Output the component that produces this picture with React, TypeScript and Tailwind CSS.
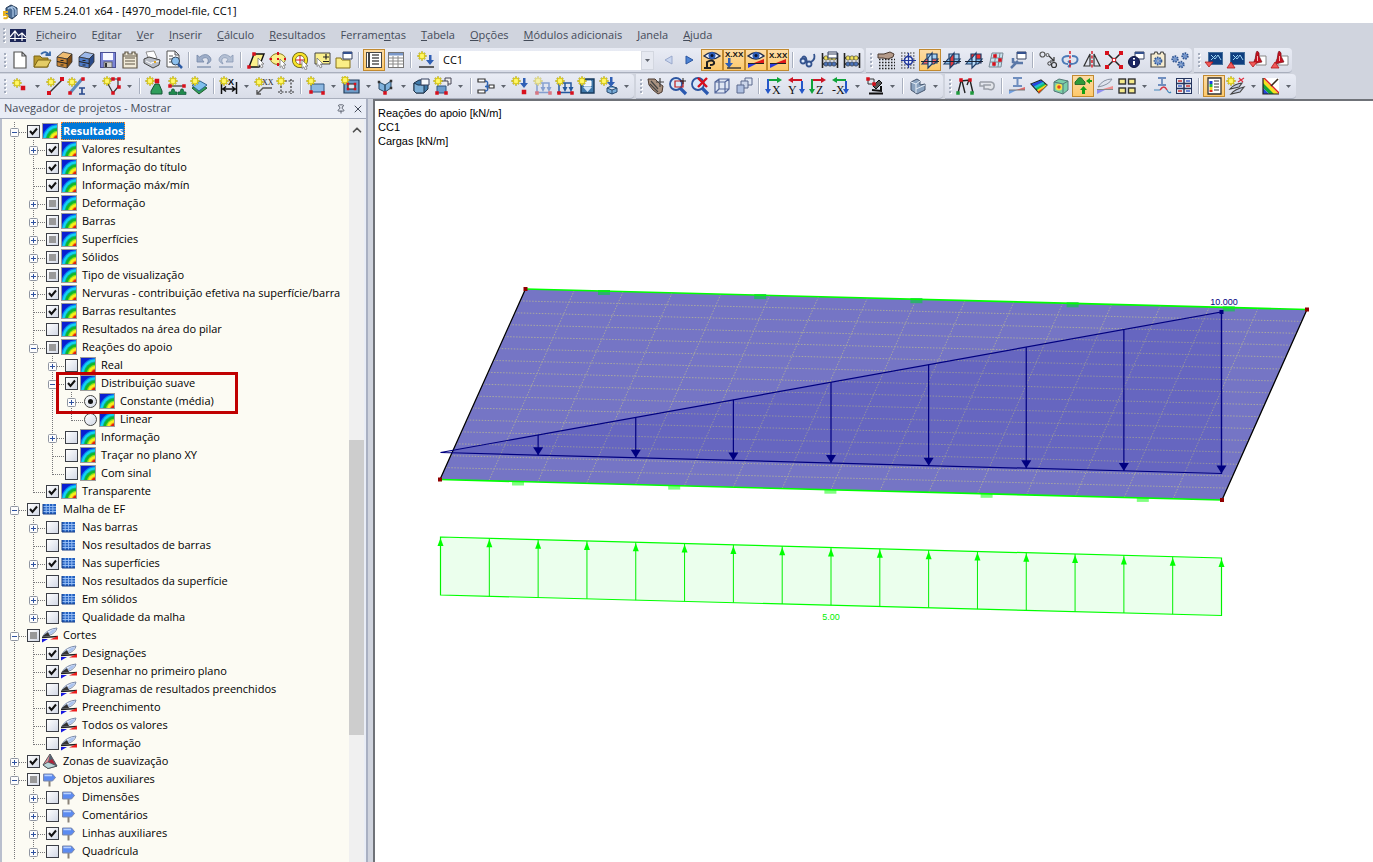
import { useState } from "react";
import type { ReactNode } from "react";
import { ChevronUp, Pin, X } from "lucide-react";

/* ---------- small drawing helpers ---------- */

const Star = ({ x = 5, y = 5 }: { x?: number; y?: number }) => (
  <g transform={`translate(${x} ${y})`}>
    <path d="M0-4.500V4.500M-4.500 0H4.500M-3-3L3 3M-3 3L3-3" stroke="#a89a10" strokeWidth="2" />
    <path d="M0-4V4M-4 0H4M-2.500-2.500L2.500 2.500M-2.500 2.500L2.500-2.500" stroke="#fff23a" strokeWidth="1.200" />
    <circle r="2" fill="#fff76b" />
  </g>
);

const Dot = ({ x, y, s = 3.5, c = "#d8101c" }: { x: number; y: number; s?: number; c?: string }) => (
  <rect x={x - s / 2} y={y - s / 2} width={s} height={s} fill={c} />
);

const P = ({ d, c = "#333", w = 1.2, f = "none" }: { d: string; c?: string; w?: number; f?: string }) => (
  <path d={d} stroke={c} strokeWidth={w} fill={f} />
);

const Arrow = ({ x, y, c = "#2f5fb5" }: { x: number; y: number; c?: string }) => (
  <path d={`M${x - 1} ${y - 9}h2.500v5h2.500l-4 5-4-5h3z`} fill={c} />
);

const Cursor = ({ x, y }: { x: number; y: number }) => (
  <path d={`M${x} ${y}l6 6h-2.500l1.500 3-1.800.8-1.400-3-1.800 1.700z`} fill="#fff" stroke="#777" strokeWidth=".8" />
);

const Support = ({ x, y, c = "#1f8a4c" }: { x: number; y: number; c?: string }) => (
  <path d={`M${x - 1} ${y}h2l1 3h2v2.500h-8v-2.500h2z`} fill={c} stroke="#11583a" strokeWidth=".7" />
);

const Cabinet = ({ top, front, side }: { top: string; front: string; side: string }) => (
  <>
    <P d="M3 7L9 2L18 4L13 9Z" c="#333" w={0.8} f={top} />
    <P d="M13 9L18 4V12L13 18Z" c="#333" w={0.8} f={side} />
    <P d="M3 7L13 9V18L3 16Z" c="#333" w={0.8} f={front} />
    <P d="M3 11.500L13 13.500M6.500 10.500h3M6.500 15h3" c="#222" w={1.2} />
  </>
);

const Eye = () => (
  <>
    <P d="M2 6Q10-1 18 6Q10 12 2 6Z" c="#23304f" w={1.4} f="#f4f7ff" />
    <circle cx="10" cy="5.500" r="3.500" fill="#2c5cb8" />
    <circle cx="10" cy="5.500" r="1.500" fill="#0b1430" />
  </>
);

const Slope = () => (
  <>
    <path d="M2 14L10 14L2 18Z" fill="#2d3bdc" />
    <path d="M18 9L18 13L8 13Z" fill="#e01b1b" />
    <P d="M2 13.500H18" c="#222" w={1} />
  </>
);

const GridDots = () => <P d="M3 3h15M3 6h15M3 9h15M3 12h15M3 15h15M3 18h15" c="#333" w={1.2} />;

const Planes = ({ red }: { red: "flat" | "left" | "front" }) => (
  <>
    <P d="M7 4H17V13H7Z" c="#1d3c66" w={1.2} f={red === "front" ? "#f23030" : "#a8d2f2"} />
    <P d="M2 14L6 9H18L14 14Z" c="#1d3c66" w={1.2} f={red === "flat" ? "#f26060" : "#8cc0ea"} />
    <P d="M8 8L12 3V14L8 18Z" c="#1d3c66" w={1.2} f={red === "left" ? "#e23c3c" : "#b8dcf8"} />
    <P d="M1 11.500H19" c="#1a2436" w={1} />
  </>
);

const Boxed = () => (
  <>
    <P d="M3 7L8 4H17V13L13 17H5L3 15Z" c="#1f3348" w={1} f="#3f78a8" />
    <P d="M3 7L7 9H13V17H5L3 15Z" c="#1f3348" w={1} f="#7db0d8" />
  </>
);

const Axis = ({ t, a, b, flip = false }: { t: string; a: string; b: string; flip?: boolean }) => (
  <>
    {flip ? <P d="M16 4H6" c={a} w={2} /> : <P d="M4 4H14" c={a} w={2} />}
    {flip ? <path d="M7 1V7L2 4Z" fill={a} /> : <path d="M13 1V7L18 4Z" fill={a} />}
    {flip ? <path d="M15 5h2v8h2l-3 5l-3-5h2z" fill={b} /> : <path d="M3 3h2v10h2l-3 5l-3-5h2z" fill={b} />}
    <text x={flip ? 2 : 8} y="18" fontSize="12" fontFamily="Liberation Serif" fill="#111">
      {t}
    </text>
  </>
);

const Frames = ({ c }: { c: string }) => (
  <>
    <P d="M4 16V7H10V13M10 7H16V13M2 16.500H17" c={c} w={1.5} />
    <path d="M7.500 11h5l-2.500 5zM13.500 11h5l-2.500 5z" fill={c} />
    <Dot x={4} y={17} />
    <Dot x={17} y={17} />
    <Star x={5} y={5} />
  </>
);

const Glass = () => (
  <>
    <P d="M12 12L18 18" c="#2b59b0" w={3.2} />
    <circle cx="8" cy="8" r="6" fill="#d7e8fa" stroke="#2d55a0" strokeWidth="1.800" />
  </>
);

const Abacus = () => (
  <>
    <P d="M2.500 3V18M17.500 3V18M3 8H17M3 14H17" c="#222" w={1.6} />
    <g stroke="#333" strokeWidth=".6">
      {[6, 10, 14].map((x) => (
        <circle key={x} cx={x} cy="8" r="2.200" fill="#f1e15a" />
      ))}
      {[6, 10, 14].map((x) => (
        <circle key={x} cx={x} cy="14" r="2.200" fill="#4a72b8" />
      ))}
    </g>
  </>
);

const Panel = () => (
  <>
    <P d="M9 2H18V9H9Z" c="#34415e" w={1} f="#fff" />
    <P d="M9 3H18" c="#34518e" w={2} />
  </>
);

const Gear = ({ x, y, r = 3.5 }: { x: number; y: number; r?: number }) => (
  <g transform={`translate(${x} ${y})`}>
    <circle r={r} fill="#7fa3dd" stroke="#31558f" strokeWidth="1.800" strokeDasharray="1.500 1" />
    <circle r={r / 3} fill="#f4f7fb" stroke="#31558f" strokeWidth=".6" />
  </g>
);

const Monitor = () => (
  <>
    <rect x="4.500" y="2.500" width="14" height="12" fill="#0f3f80" stroke="#46709c" />
    <P d="M7 5L11 9L14 5L17 10M7 10L12 5" c="#9cd4f4" w={1} />
  </>
);

const Pdf = () => (
  <>
    <P d="M8 6H18V15H8Z" c="#888" w={1} f="#fff" />
    <path d="M9 1Q12 2 11 6L14 12L5 14Q8 8 8 3Z" fill="#c41220" stroke="#6d0d14" strokeWidth=".6" />
    <P d="M9.500 6V11" c="#f7b5b5" w={1} />
  </>
);

const DownMark = () => <path d="M1 12H9L5 17Z" fill="#f25a5a" stroke="#b01818" strokeWidth=".8" />;
const UpMark = () => <path d="M1 18H9L5 12Z" fill="#f25a5a" stroke="#b01818" strokeWidth=".8" />;

/* ---------- toolbar icons, drawn on a 20x20 grid ---------- */

const icons: Record<string, ReactNode> = {
  new: <P d="M4 2H12L16 6V18H4ZM12 2V6H16" c="#555" w={1.2} f="#fff" />,
  open: (
    <>
      <P d="M2 6H8L10 8H16V17H2Z" c="#7c6414" w={1} f="#b99a2d" />
      <P d="M2 17L6 10H19L15 17Z" c="#7c6414" w={1} f="#e4cc66" />
      <P d="M9 4Q14 0 17 5M13.500 5H18V1.500" c="#3767a8" w={1.800} />
    </>
  ),
  cabBrown: <Cabinet top="#f0bd72" front="#c98635" side="#7b4a14" />,
  cabBlue: <Cabinet top="#9db9ea" front="#4f7cc8" side="#28498a" />,
  save: (
    <>
      <rect x="2.500" y="2.500" width="15" height="15" fill="#7b85d6" stroke="#4a4f94" />
      <rect x="5" y="3" width="10" height="7" fill="#f7f7ff" />
      <rect x="6" y="12" width="8" height="5.500" fill="#ccc" stroke="#555" strokeWidth=".8" />
      <rect x="7" y="13" width="2" height="4" fill="#333" />
    </>
  ),
  report: <P d="M3 4H5V2H8V4H12V2H15V4H17V18H3ZM5 8H15M5 11H15M5 14H15M3 6H17" c="#5e5444" w={1.2} f="#f1ead8" />,
  print: (
    <>
      <P d="M4 2L12 1L15 8L7 10Z" c="#777" w={0.8} f="#fff" />
      <P d="M2 9L7 7L18 10L17 15L11 18L2 13Z" c="#444" w={1} f="#b9bdc6" />
      <P d="M9 13L17 11M4 11L10 14" c="#fff" w={1} />
      <Dot x={13} y={12} s={2} c="#e2a71c" />
    </>
  ),
  preview: (
    <>
      <P d="M3 1H11L15 5V17H3ZM11 1V5H15M5 6H9M5 9H9M5 12H9" c="#555" w={1} f="#fff" />
      <circle cx="11.500" cy="11" r="4" fill="#8cc0ee" stroke="#345" />
      <P d="M14 14L18 18" c="#2b5aa5" w={2.5} />
    </>
  ),
  undo: (
    <>
      <path d="M3 5V12H10L8 9.500Q11 6 14 9Q15 11 13 14Q19 11 16 7Q12 2 5.500 7Z" fill="#9dadc8" stroke="#7486a6" strokeWidth=".8" />
      <P d="M3 17H17" c="#8f9eb8" w={1.6} />
    </>
  ),
  redo: (
    <>
      <path d="M17 5V12H10L12 9.500Q9 6 6 9Q5 11 7 14Q1 11 4 7Q8 2 14.500 7Z" fill="#b4c0d4" stroke="#8898b4" strokeWidth=".8" />
      <P d="M3 17H17" c="#9dabc2" w={1.6} />
    </>
  ),
  plate: (
    <>
      <P d="M3 17L8 4H18L13 17Z" c="#111" w={1.4} f="#fbf08c" />
      <Dot x={3} y={17} />
      <Dot x={8} y={4} />
      <Cursor x={12} y={8} />
    </>
  ),
  ellipse: (
    <>
      <ellipse cx="10" cy="9" rx="7.500" ry="5.500" fill="#fbf08c" stroke="#8c7b22" />
      <P d="M10 2V5M10 13V16M1.500 9H4M16 9H18M9 9H11" c="#d8101c" w={2} />
      <Cursor x={12} y={9} />
    </>
  ),
  ring: (
    <>
      <circle cx="10" cy="10" r="6" fill="#fff" stroke="#5c5208" strokeWidth="4" />
      <circle cx="10" cy="10" r="6" fill="none" stroke="#f7e32a" strokeWidth="2.500" />
      <P d="M10 6V14M6 10H14" c="#d8101c" w={1} />
      <Cursor x={12} y={10} />
    </>
  ),
  selPm: (
    <>
      <P d="M3 3H18V14H3Z" c="#444" w={1} f="#fbf08c" />
      <P d="M11 7H17M14 4V9.500M11 11.500H17" c="#222" w={1.2} />
      <Cursor x={5} y={8} />
    </>
  ),
  folders: (
    <>
      <P d="M2 8H7L8 10H16V18H2Z" c="#857019" w={1} f="#fbee86" />
      <Panel />
    </>
  ),
  listOn: (
    <>
      <rect x="2.500" y="2.500" width="15" height="15" fill="#fff" stroke="#444" />
      <P d="M5 3V17" c="#444" w={2} />
      <P d="M8 5H15M8 8H15M8 11H15M8 14H15" c="#555" w={1.5} />
    </>
  ),
  table: (
    <>
      <rect x="2.500" y="2.500" width="15" height="15" fill="#fff" stroke="#777" />
      <rect x="3" y="3" width="14" height="2.500" fill="#7a98c9" />
      <P d="M3 8H17M3 11H17M3 14H17M7 6V17M12 6V17" c="#888" w={1} />
    </>
  ),
  loadCase: (
    <>
      <Star x={6} y={6} />
      <Arrow x={14} y={14} />
      <P d="M3 17H18" c="#333" w={1.5} />
    </>
  ),
  prev: <path d="M14 6V14L7 10Z" fill="#c9d6ef" stroke="#9aa9cc" />,
  next: <path d="M6 6V14L13 10Z" fill="#4c83d4" stroke="#2c56a0" />,
  eyeSupport: (
    <>
      <P d="M5 17V12Q10 9 12 12Q13 15 8 15M2 18H9" c="#222" w={2} />
      <Eye />
    </>
  ),
  valDown: (
    <>
      <text x="1" y="7" fontSize="8" fontWeight="bold" fontFamily="Liberation Sans" fill="#111">
        X.XX
      </text>
      <Arrow x={5} y={17} />
      <P d="M3 18H17" c="#333" w={1.4} />
    </>
  ),
  eyeSlope: (
    <>
      <Slope />
      <Eye />
    </>
  ),
  valSlope: (
    <>
      <Slope />
      <text x="1" y="8" fontSize="8" fontWeight="bold" fontFamily="Liberation Sans" fill="#111">
        X.XX
      </text>
    </>
  ),
  glasses: (
    <g fill="#dbe8fa" stroke="#34538e" strokeWidth="1.800">
      <circle cx="5" cy="11" r="2.500" />
      <circle cx="11" cy="14" r="2.500" />
      <path d="M4 8Q6 5 8 8L9 12M13 12Q18 9 16 4" fill="none" />
    </g>
  ),
  abacusPanel: (
    <>
      <Abacus />
      <P d="M8 2H17V8H8ZM8 4H17" c="#34415e" w={1} f="#fff" />
    </>
  ),
  abacus: <Abacus />,
  hand: (
    <>
      <g strokeDasharray="1.500 1.500">
        <P d="M3 9.500h16M3 12.500h16M3 15.500h16M3 18.500h16" c="#222" w={1.4} />
      </g>
      <P d="M2 4H8L14 2L18 4L17 7L12 9L7 8H2Z" c="#4b3a30" w={1} f="#b59b8a" />
    </>
  ),
  snap: (
    <>
      <g strokeDasharray="1.500 1.500">
        <GridDots />
      </g>
      <circle cx="10.500" cy="10.500" r="4" fill="#e8eefb" stroke="#22389c" strokeWidth="1.600" />
      <P d="M10.500 3V18M3 10.500H18" c="#22389c" w={1.2} />
    </>
  ),
  planeA: <Planes red="flat" />,
  planeB: <Planes red="left" />,
  planeC: <Planes red="front" />,
  meshPts: (
    <>
      <P d="M6 3H17L15 17H3ZM10 3L8 17M14 3L12 17M5 8H17M4 12H16" c="#7b8a96" w={1} f="#c6e2ee" />
      <Dot x={9} y={6} />
      <Dot x={14} y={10} />
      <Dot x={8} y={14} />
    </>
  ),
  wrench: (
    <>
      <P d="M3 18L10 11M5 8V12L8 13H15" c="#5a78a8" w={2.5} />
      <Panel />
    </>
  ),
  copyMove: (
    <>
      <circle cx="4.500" cy="4.500" r="2.500" fill="none" stroke="#555" strokeWidth="1.200" />
      <circle cx="9.500" cy="5" r="1.500" fill="none" stroke="#555" />
      <circle cx="16" cy="15" r="2.500" fill="none" stroke="#333" strokeWidth="1.200" />
      <circle cx="11.500" cy="13.500" r="1.700" fill="none" stroke="#333" />
      <P d="M11 6L16 11M16 7V11H12" c="#333" />
    </>
  ),
  rotate: (
    <>
      <P d="M9 6Q2 6 2.500 10Q3 14 8 14M12 6Q18 6 17.500 10Q17 14 11 14M8 11L11 14L8 17" c="#4c7bb8" w={2} />
      <g strokeDasharray="3 1.500">
        <P d="M10 1V19" c="#d8101c" w={1.4} />
      </g>
    </>
  ),
  mirror: (
    <>
      <P d="M8 4V16H2ZM12 4V16H18Z" c="#333" w={1.2} />
      <g strokeDasharray="3 1.500">
        <P d="M10 1V19" c="#d8101c" w={1.4} />
      </g>
    </>
  ),
  crossNodes: (
    <>
      <P d="M3 3L17 17M17 3L3 17" c="#222" w={1.5} />
      <Dot x={3} y={3} s={4} />
      <Dot x={17} y={3} s={4} />
      <Dot x={3} y={17} s={4} />
      <Dot x={17} y={17} s={4} />
      <circle cx="10" cy="10" r="1.800" fill="#fff" stroke="#d8101c" />
    </>
  ),
  info: (
    <>
      <Panel />
      <circle cx="8" cy="12" r="5.500" fill="#1c2763" stroke="#0d1440" />
      <P d="M8 11V15M8 8V9.500" c="#fff" w={2} />
    </>
  ),
  gearBox: (
    <>
      <P d="M3 4H6L7 2H9L10 4H12L13 2H15L16 4H17V17H3Z" c="#444" w={1.2} f="#f6ecd0" />
      <Gear x={10} y={11} r={3.5} />
    </>
  ),
  gears: (
    <>
      <Gear x={5} y={9} r={2.8} />
      <Gear x={15} y={6} r={2.8} />
      <Gear x={11} y={14.5} r={2.8} />
    </>
  ),
  monDown: (
    <>
      <Monitor />
      <DownMark />
    </>
  ),
  monUp: (
    <>
      <Monitor />
      <UpMark />
    </>
  ),
  pdfDown: (
    <>
      <Pdf />
      <DownMark />
    </>
  ),
  pdfUp: (
    <>
      <Pdf />
      <UpMark />
    </>
  ),
  node: (
    <>
      <Star x={7} y={7} />
      <Dot x={13} y={12} s={4.5} />
    </>
  ),
  line: (
    <>
      <P d="M4 17L17 4" c="#333" w={1.4} />
      <Star x={6} y={6} />
      <Dot x={4} y={17} s={4} />
      <Dot x={17} y={3} s={4} />
    </>
  ),
  member: (
    <>
      <P d="M3 17L15 3" c="#5d8bbd" w={3} />
      <P d="M12 12H18M12 18H18M15 12V18" c="#27488c" w={1.6} />
      <Star x={5} y={6} />
      <Dot x={3} y={17} />
      <Dot x={16} y={3} />
    </>
  ),
  polyline: (
    <>
      <P d="M6 8L11 17L16 11V3H8" c="#333" w={1.2} />
      <Star x={5} y={5} />
      <Dot x={11} y={3} />
      <Dot x={17} y={3} />
      <Dot x={17} y={11} />
      <Dot x={11} y={17} />
    </>
  ),
  nodeSupport: (
    <>
      <P d="M10 8H14L17 15V18H6V15Z" c="#155434" w={1} f="#2f9e5b" />
      <Star x={5} y={5} />
      <Dot x={12} y={5} s={4.5} />
    </>
  ),
  lineSupport: (
    <>
      <P d="M3 10H17" c="#333" w={1.2} />
      <Support x={6} y={13} />
      <Support x={15} y={13} />
      <Star x={6} y={5} />
      <Dot x={3} y={10} />
      <Dot x={17} y={10} />
    </>
  ),
  surfSupport: (
    <>
      <P d="M3 12L11 8L18 12L10 18Z" c="#1d5c2c" w={1} f="#2f9e5b" />
      <P d="M3 9.500L11 5L18 9L10 15Z" c="#2f6390" w={1} f="#7fc0ee" />
      <Star x={6} y={5} />
    </>
  ),
  dimension: (
    <>
      <P d="M2.500 6V18M17.500 6V18M3 13H17M7 10.500L4 13L7 15.500M13 10.500L16 13L13 15.500" c="#111" w={1.5} />
      <text x="9" y="9" fontSize="9" fontWeight="bold" fontFamily="Liberation Sans" fill="#111">
        X
      </text>
      <Star x={5} y={5} />
    </>
  ),
  comment: (
    <>
      <P d="M3 18L9 12H18M3 14V18H7" c="#555" w={1.4} />
      <text x="8" y="9" fontSize="8" fontFamily="Liberation Serif" fill="#222">
        XX
      </text>
      <Star x={5} y={6} />
    </>
  ),
  guides: (
    <>
      <g strokeDasharray="2 1.500">
        <P d="M5 3V18M15 3V18M2 5H18M2 16H18" c="#333" w={1.2} />
      </g>
      <Star x={5} y={5} />
    </>
  ),
  surface: (
    <>
      <P d="M5 8H18V16H5Z" c="#2f5580" w={1} f="#8db8e2" />
      <Star x={5} y={5} />
      <Dot x={5} y={16} />
      <Dot x={17} y={17} />
    </>
  ),
  opening: (
    <>
      <P d="M3 4H18V17H3Z" c="#243f5e" w={1.2} f="#6e9cc8" />
      <P d="M7 8H14V13H7Z" c="#222" w={1.2} f="#dfe7f2" />
      <Star x={4} y={4} />
      <Dot x={7} y={8} s={2.5} />
      <Dot x={14} y={8} s={2.5} />
      <Dot x={7} y={13} s={2.5} />
      <Dot x={14} y={13} s={2.5} />
    </>
  ),
  shell: (
    <>
      <P d="M3 6L9 9V16L3 13ZM9 9L15 5V12L9 16Z" c="#2a4a66" w={1} f="#7fb1dc" />
      <Dot x={3} y={6} c="#333" s={2.5} />
      <Dot x={15} y={12} c="#333" s={2.5} />
      <Dot x={15} y={5} c="#333" s={2.5} />
      <Dot x={9} y={17} />
    </>
  ),
  solid: (
    <>
      <Boxed />
      <P d="M10 3H18V9H10Z" c="#34415e" w={1} f="#f6f8fc" />
    </>
  ),
  copyObj: (
    <>
      <P d="M4 10H13V17H4Z" c="#2f5580" w={1} f="#6c9ccc" />
      <P d="M9 5H15V10M12 2H18V8H15M12 2V5" c="#445" w={1} f="#eee" />
      <Star x={5} y={5} />
      <Dot x={4} y={17} />
      <Dot x={13} y={17} />
    </>
  ),
  loadTree: (
    <>
      <P d="M2 3H9V6H2ZM2 14H9V17H2ZM13 9H18V12H13Z" c="#333" w={1.2} f="#fff" />
      <P d="M9 5Q13 5 11 10M9 15Q13 15 11 11M9 10.500H13" c="#2e63b0" w={1.5} />
    </>
  ),
  nodeLoad: (
    <>
      <Star x={5} y={5} />
      <Arrow x={13} y={11} />
      <Dot x={13} y={16} s={4.5} />
    </>
  ),
  lineLoadOff: (
    <g opacity=".5">
      <Frames c="#2f5fb5" />
    </g>
  ),
  lineLoad: <Frames c="#24589e" />,
  surfLoad: (
    <>
      <P d="M4 3H17V17H4Z" c="#173a5e" w={1.4} f="#3f78aa" />
      <P d="M7 5H14V10H7Z" c="#fff" w={1} f="#e9f1fa" />
      <path d="M6 11h9l-4.500 5z" fill="#cfe4f8" />
      <Star x={5} y={5} />
    </>
  ),
  solidLoad: (
    <>
      <P d="M8 12L12 10L18 12V16L13 18L8 16ZM8 12L13 14L18 12M13 14V18" c="#284c72" w={1} f="#78abd6" />
      <Star x={5} y={5} />
      <Arrow x={12} y={10} />
    </>
  ),
  pan: (
    <>
      <P d="M2 3H9L14 8L17 10L16 16L12 18L7 14L3 9Z" c="#4b3a30" w={1} f="#a8917f" />
      <P d="M14 2V11M10 6H18M5 5L12 13M4 8L12 16" c="#444" w={1.2} />
    </>
  ),
  zoomWin: (
    <>
      <Glass />
      <P d="M7 5H15V11H7Z" c="#c21a1a" w={1.2} />
      <P d="M15 2V8M12 5H18" c="#222" w={1} />
    </>
  ),
  zoomAll: (
    <>
      <Glass />
      <P d="M8 2L17 11M17 2L8 11" c="#d8101c" w={2.4} />
    </>
  ),
  wireBox: <P d="M3 6L7 3H17V13L13 17H3ZM3 6H13V17M13 6L17 3M7 3V13H17M7 13L3 17" c="#56699c" w={1.2} f="#dfe6f3" />,
  stack: (
    <>
      <P d="M11 2H18V9H11Z" c="#5b688c" w={1} f="#dfe6f3" />
      <P d="M7 5H14V12H7Z" c="#5b688c" w={1} f="#ccd6ea" />
      <P d="M3 9H10V17H3Z" c="#5b688c" w={1} f="#aebfe0" />
    </>
  ),
  axX: <Axis t="X" a="#10a33a" b="#2457c9" />,
  axY: <Axis t="Y" a="#cc1626" b="#2457c9" flip />,
  axZ: <Axis t="Z" a="#cc1626" b="#10a33a" />,
  axNX: <Axis t="-X" a="#10a33a" b="#2457c9" flip />,
  microscope: (
    <>
      <P d="M8 10L14 4L17 7L11 13Z" c="#111" w={1} f="#555" />
      <P d="M4 17.500H18M7 14L16 15V10" c="#111" w={2} />
      <P d="M3 3H9V8H3Z" c="#333" w={1} />
      <Dot x={3} y={3} />
      <Dot x={9} y={8} />
    </>
  ),
  iso: (
    <>
      <P d="M3 6L9 3L12 5V9L17 8V14L9 18L3 14Z" c="#46566e" w={1} f="#8ba3bf" />
      <P d="M3 6L8 8V17M8 8L12 5M8 13L17 9" c="#e6eef7" w={1} />
    </>
  ),
  portal: (
    <>
      <P d="M3 17L6 5L15 4L18 17M7 5L10 17M14 4L12 9" c="#222" w={1.4} />
      <Dot x={6} y={4} />
      <Dot x={15} y={4} />
      <Dot x={3} y={17} c="#1f9a3c" />
      <Dot x={17} y={17} c="#1f9a3c" />
    </>
  ),
  clip: <P d="M3 6H14Q18 7 17 11Q16 15 11 13H7V9H14M3 6V10H7" c="#9a9fa8" w={1.5} f="#e3e5ea" />,
  section: (
    <>
      <P d="M6 2H15M6 10H15M10.500 2V10" c="#6f8ebf" w={2} />
      <path d="M2 14H10L2 18Z" fill="#6f9fe0" />
      <path d="M18 11V14H9Z" fill="#e06a6a" />
      <P d="M2 14H18" c="#777" w={1} />
    </>
  ),
  isoSurf: (
    <>
      <P d="M2 8L12 4L18 9L10 17Z" c="#222" w={1.2} f="#18c05a" />
      <path d="M2.500 8L12 4.500L14 6L5 10.500Z" fill="#2746e0" />
      <path d="M5 10.500L14 6L15.500 7.200L6.500 12.500Z" fill="#20b8d8" />
      <path d="M8 14L17 8.500L18 9L10 17Z" fill="#f5d522" />
      <path d="M9 15.500L14.500 12L10 17Z" fill="#e8341c" />
    </>
  ),
  isoCube: (
    <>
      <P d="M3 6L8 3L17 5V14L12 18L3 15Z" c="#577" w={1} f="#79cfa8" />
      <circle cx="8" cy="11" r="3.500" fill="#f4e34a" />
      <circle cx="8" cy="11" r="1.800" fill="#e6461e" />
      <P d="M12 8V18M3 6L12 8L17 5" c="#577" w={1} />
    </>
  ),
  supportReac: (
    <>
      <P d="M4 4Q5 1.500 7 1.500Q9 1.500 10 4L12 6V8.500H2V6Z" c="#1b5c22" w={0.8} f="#2f9a3a" />
      <path d="M9 18V14H7L10.500 10L14 14H12V18Z" fill="#14a014" />
      <path d="M19 4V6H17V8L13 5L17 2V4Z" fill="#14a014" />
    </>
  ),
  cut: (
    <>
      <P d="M3 11Q8 3 17 3Q14 9 3 11Z" c="#8a93a3" w={1} f="#dfe4ee" />
      <path d="M2 14H10L2 18Z" fill="#8f8ff0" />
      <path d="M18 10V13H8Z" fill="#f09090" />
      <P d="M2 13.500H18" c="#888" w={1} />
    </>
  ),
  windows: (
    <g fill="#f4e88a" stroke="#333" strokeWidth="1.400">
      <rect x="2" y="3" width="6.500" height="5" />
      <rect x="11.500" y="3" width="6.500" height="5" />
      <rect x="2" y="12" width="6.500" height="5" />
      <rect x="11.500" y="12" width="6.500" height="5" />
    </g>
  ),
  curve: (
    <>
      <P d="M6 2H14M6 9H14M10 2V9" c="#6f8ebf" w={1.8} />
      <P d="M8 14Q12 8 15 14" c="#d43a4a" w={1.4} />
      <P d="M2 14H8M15 14Q17 18 19 16" c="#48b" w={1.2} />
    </>
  ),
  resTable: (
    <>
      <rect x="2.500" y="2.500" width="15" height="15" fill="#e8ecf5" stroke="#24345e" />
      <P d="M3 7.500H17M3 12.500H17M10 3V17" c="#24345e" w={1.5} />
      <P d="M4 5H8M12 10H16M4 15H8" c="#c33" w={1.5} />
      <P d="M12 5H16M4 10H8M12 15H16" c="#46c" w={1.5} />
    </>
  ),
  panelOn: (
    <>
      <P d="M4 2H17V18H4Z" c="#333" w={1.3} f="#fff" />
      <P d="M7 5V8" c="#1a3fe0" w={3} />
      <P d="M7 8V11" c="#1fba3f" w={3} />
      <P d="M7 11V14" c="#f2d41f" w={3} />
      <P d="M7 14V16" c="#df2a1a" w={3} />
      <P d="M10 5H15M10 8H15M10 11H15M10 14H15" c="#333" w={1.2} />
    </>
  ),
  newCut: (
    <>
      <P d="M4 13Q8 8 16 7L13 11ZM5 18Q9 13 18 11L14 16Z" c="#444" w={1.2} f="#c5cde0" />
      <P d="M12 6L18 2M13 2L17 6" c="#e03040" w={1.2} />
      <Star x={5} y={5} />
    </>
  ),
  colors: (
    <>
      <rect x="2" y="2" width="16" height="16" fill="#fff" />
      <path d="M2 2L18 18H12L2 8Z" fill="#f5df1f" />
      <path d="M2 2L4 2L18 16V18Z" fill="#e02222" />
      <path d="M2 7L13 18H8L2 12Z" fill="#12a53a" />
      <path d="M2 12L8 18H2Z" fill="#2347dd" />
      <P d="M10 10L17 3" c="#3a2a1a" w={1.6} />
      <P d="M2 2V18H18" c="#222" w={1.2} />
    </>
  ),
};

/* ---------- toolbars ---------- */

// "|" is a separator, a trailing ">" adds a drop-down arrow, a leading "*" is pressed
const fileBar = "new open cabBrown cabBlue save report print preview | undo redo | plate ellipse ring selPm folders | *listOn table | loadCase".split(" ");
const caseBar = "prev next *eyeSupport *valDown *eyeSlope *valSlope | glasses abacusPanel abacus".split(" ");
const gridBar = "hand snap *planeA planeB planeC meshPts wrench | copyMove rotate mirror crossNodes info gearBox gears".split(" ");
const exportBar = "monDown monUp pdfDown pdfUp".split(" ");
const insertBar = "node> line member> polyline> | nodeSupport lineSupport surfSupport | dimension> comment guides | surface> opening> shell> solid copyObj> | loadTree> nodeLoad lineLoadOff lineLoad surfLoad solidLoad>".split(" ");
const viewBar = "pan zoomWin zoomAll wireBox stack | axX axY axZ axNX> microscope> | iso>".split(" ");
const resultBar = "portal clip | section isoSurf isoCube *supportReac cut windows> curve resTable | *panelOn newCut> colors>".split(" ");

function ToolItem({ item }: { item: string }) {
  if (item === "|") return <span className="mx-[3px] h-4 w-0.5 shrink-0 border-l border-[#a9b0bf] bg-white" />;
  const pressed = item.startsWith("*");
  const hasMenu = item.endsWith(">");
  const name = item.replace(/[*>]/g, "");
  return (
    <>
      <button
        type="button"
        aria-label={name}
        aria-pressed={pressed}
        className={
          pressed
            ? "flex h-[22px] w-[22px] shrink-0 items-center justify-center border border-[#c28a30] bg-linear-to-b from-[#fddca4] to-[#fdc96a]"
            : "flex h-[22px] w-[22px] shrink-0 items-center justify-center hover:bg-[#fde3b0]"
        }
      >
        <svg viewBox="0 0 20 20" className="h-5 w-5 shrink-0">
          {icons[name]}
        </svg>
      </button>
      {hasMenu && (
        <button type="button" aria-label={`${name} menu`} className="flex h-[22px] w-[13px] shrink-0 items-center justify-center">
          <Caret />
        </button>
      )}
    </>
  );
}

const Caret = () => (
  <svg viewBox="0 0 5 3" className="h-[3px] w-[5px]">
    <path d="M0 0H5L2.500 3Z" fill="#5f646e" />
  </svg>
);

const Grip = () => (
  <svg viewBox="0 0 8 16" className="h-4 w-2 shrink-0">
    {[1, 5, 9, 13].map((y) => (
      <g key={y}>
        <rect x="4" y={y + 1} width="2" height="2" fill="#fff" />
        <rect x="3" y={y} width="2" height="2" fill="#a5adbd" />
      </g>
    ))}
  </svg>
);

function Bar({ items, children }: { items: string[]; children?: ReactNode }) {
  return (
    <div className="flex h-[25px] shrink-0 items-center rounded-r-sm border-b border-[#a9afbd] bg-linear-to-b from-[#e9ecf5] to-[#d9dde8] pr-px pl-px">
      <Grip />
      {items.map((item, i) => (
        <ToolItem key={i} item={item} />
      ))}
      {children}
    </div>
  );
}

const menus: [string, string, string][] = [
  ["", "F", "icheiro"],
  ["E", "d", "itar"],
  ["", "V", "er"],
  ["", "I", "nserir"],
  ["", "C", "álculo"],
  ["", "R", "esultados"],
  ["Ferrame", "n", "tas"],
  ["", "T", "abela"],
  ["", "O", "pções"],
  ["", "M", "ódulos adicionais"],
  ["", "J", "anela"],
  ["", "A", "juda"],
];

/* ---------- project navigator ---------- */

type Check = "on" | "off" | "mixed" | "radioOn" | "radioOff";
type Glyph = "result" | "mesh" | "cut" | "zone" | "sign";
type TreeNode = { label: string; icon: Glyph; check: Check; closed?: boolean; more?: boolean; selected?: boolean; children?: TreeNode[] };

const n = (label: string, icon: Glyph, check: Check, extra: Partial<TreeNode> = {}): TreeNode => ({ label, icon, check, ...extra });
const closed = { closed: true };

const tree: TreeNode[] = [
  n("Resultados", "result", "on", {
    selected: true,
    children: [
      n("Valores resultantes", "result", "on", closed),
      n("Informação do título", "result", "on"),
      n("Informação máx/mín", "result", "on"),
      n("Deformação", "result", "mixed", closed),
      n("Barras", "result", "mixed", closed),
      n("Superfícies", "result", "mixed", closed),
      n("Sólidos", "result", "mixed", closed),
      n("Tipo de visualização", "result", "mixed", closed),
      n("Nervuras - contribuição efetiva na superfície/barra", "result", "on", closed),
      n("Barras resultantes", "result", "on"),
      n("Resultados na área do pilar", "result", "off"),
      n("Reações do apoio", "result", "mixed", {
        children: [
          n("Real", "result", "off", closed),
          n("Distribuição suave", "result", "on", {
            children: [n("Constante (média)", "result", "radioOn", closed), n("Linear", "result", "radioOff")],
          }),
          n("Informação", "result", "off", closed),
          n("Traçar no plano XY", "result", "off"),
          n("Com sinal", "result", "off"),
        ],
      }),
      n("Transparente", "result", "on"),
    ],
  }),
  n("Malha de EF", "mesh", "on", {
    children: [
      n("Nas barras", "mesh", "off", closed),
      n("Nos resultados de barras", "mesh", "off"),
      n("Nas superfícies", "mesh", "on", closed),
      n("Nos resultados da superfície", "mesh", "off"),
      n("Em sólidos", "mesh", "off", closed),
      n("Qualidade da malha", "mesh", "off", closed),
    ],
  }),
  n("Cortes", "cut", "mixed", {
    children: [
      n("Designações", "cut", "on"),
      n("Desenhar no primeiro plano", "cut", "on"),
      n("Diagramas de resultados preenchidos", "cut", "off"),
      n("Preenchimento", "cut", "on"),
      n("Todos os valores", "cut", "off"),
      n("Informação", "cut", "off"),
    ],
  }),
  n("Zonas de suavização", "zone", "on", closed),
  n("Objetos auxiliares", "sign", "mixed", {
    more: true,
    children: [
      n("Dimensões", "sign", "off", closed),
      n("Comentários", "sign", "off", closed),
      n("Linhas auxiliares", "sign", "on", closed),
      n("Quadrícula", "sign", "off", { closed: true, more: true }),
    ],
  }),
];

const glyphs: Record<Glyph, ReactNode> = {
  result: (
    <>
      <defs>
        <clipPath id="res">
          <rect x="1" y="1" width="14" height="14" />
        </clipPath>
      </defs>
      <rect width="16" height="16" fill="#9b9b9b" />
      <g clipPath="url(#res)">
        <rect x="1" y="1" width="14" height="14" fill="#0a1fd0" />
        <circle cx="16" cy="17" r="16" fill="#0b7cf0" />
        <circle cx="16" cy="17" r="14.800" fill="#12d4f0" />
        <circle cx="16" cy="17" r="12.500" fill="#0fb08a" />
        <circle cx="16" cy="17" r="11.500" fill="#12b82a" />
        <circle cx="16" cy="17" r="9.200" fill="#8be01e" />
        <circle cx="16" cy="17" r="8" fill="#f8ee1c" />
        <circle cx="16" cy="17" r="5.500" fill="#f58a14" />
        <circle cx="16" cy="17" r="4.500" fill="#e01a10" />
      </g>
    </>
  ),
  mesh: (
    <>
      <rect x="1" y="3" width="13" height="10" fill="#2361c0" />
      <path d="M1 5.500H14M1 8H14M1 10.500H14M4.200 3V13M7.500 3V13M10.800 3V13" stroke="#9cc2f7" strokeWidth=".9" />
      <path d="M1 3V13H14" fill="none" stroke="#163c86" />
    </>
  ),
  cut: (
    <>
      <path d="M1 9Q5 2 15 1Q14 6 7 8.500L1 9.500Z" fill="#e3eafa" stroke="#7c8cab" />
      <path d="M7 6Q9 2.500 14 2Q12 6 7 7.500Z" fill="#a9c3ef" />
      <path d="M0 9.500L6 5L8 9Z" fill="#333" />
      <path d="M0 10.500L16 9.500" stroke="#222" strokeWidth="1.400" />
      <path d="M0 12H6L0 15.500Z" fill="#1717e0" />
      <path d="M16 9V12.500H8Z" fill="#ee1c1c" />
    </>
  ),
  zone: (
    <>
      <path d="M8 1L1 12L6 15.500L15 13Z" fill="#e98d98" stroke="#55585e" />
      <path d="M8 1L6 9L15 13Z" fill="#54626e" />
      <path d="M1 12L6 9L15 13L6 15.500Z" fill="#b8d6d8" stroke="#40484c" strokeWidth=".8" />
      <path d="M6 9L13 11L10 6Z" fill="#b02338" />
    </>
  ),
  sign: (
    <>
      <path d="M7.500 9V15.500" stroke="#8a8378" strokeWidth="2" />
      <path d="M1.500 3H10.500L13.500 6.500L10.500 10H1.500Z" fill="#5c8bf0" stroke="#7c88a8" />
      <path d="M2.500 4.500H10" stroke="#b8d2ff" strokeWidth="1.500" />
    </>
  ),
};

function CheckBox({ id, check }: { id: string; check: Check }) {
  const radio = check === "radioOn" || check === "radioOff";
  return (
    <span className="grid h-[13px] w-[13px] shrink-0 place-items-center">
      <input
        id={id}
        type={radio ? "radio" : "checkbox"}
        name={radio ? "distribution" : undefined}
        defaultChecked={check === "on" || check === "radioOn"}
        ref={(el) => {
          if (el) el.indeterminate = check === "mixed";
        }}
        className={
          radio
            ? "peer col-start-1 row-start-1 h-[13px] w-[13px] appearance-none rounded-full border border-[#444] bg-linear-to-br from-white to-[#d3d9e6]"
            : "peer col-start-1 row-start-1 h-[13px] w-[13px] appearance-none border border-[#3c3f46] bg-linear-to-br from-white to-[#d3d9e6]"
        }
      />
      {radio ? (
        <span className="pointer-events-none invisible col-start-1 row-start-1 h-[5px] w-[5px] rounded-full bg-[#111] peer-checked:visible" />
      ) : (
        <>
          <span className="pointer-events-none invisible col-start-1 row-start-1 h-[7px] w-[7px] bg-[#999] peer-indeterminate:visible" />
          <svg viewBox="0 0 9 9" className="pointer-events-none invisible col-start-1 row-start-1 h-[9px] w-[9px] peer-checked:visible">
            <path d="M1 4L3.500 7L8 1.500" fill="none" stroke="#111" strokeWidth="2" />
          </svg>
        </>
      )}
    </span>
  );
}

// vertical dotted guide of an ancestor level
const Guide = ({ on }: { on: boolean }) => (
  <svg viewBox="0 0 19 18" className="h-[18px] w-[19px] shrink-0">
    {on && <path d="M9.500 0V18" stroke="#77777a" strokeDasharray="1 1" />}
  </svg>
);

function Joint({ open, branch, last }: { open: boolean; branch: boolean; last: boolean }) {
  return (
    <svg viewBox="0 0 22 18" className="h-[18px] w-[22px] shrink-0">
      <path d={last ? "M9.500 0V11" : "M9.500 0V18"} stroke="#77777a" strokeDasharray="1 1" />
      <path d="M10 10.500H21" stroke="#77777a" strokeDasharray="1 1" />
      {branch && (
        <>
          <rect x="5.500" y="6.500" width="8" height="8" rx="1" fill="#fdfdfd" stroke="#8f95a1" />
          <path d={open ? "M7 10.500H12" : "M7 10.500H12M9.500 8V13"} stroke="#2e52a0" />
        </>
      )}
    </svg>
  );
}

function TreeItem({ node, guides, last, path }: { node: TreeNode; guides: boolean[]; last: boolean; path: string }) {
  const [open, setOpen] = useState(!node.closed);
  const branch = Boolean(node.children) || Boolean(node.closed);
  const joint = <Joint open={open} branch={branch} last={last} />;
  return (
    <li>
      <div className="flex h-[18px] items-center">
        {guides.map((on, i) => (
          <Guide key={i} on={on} />
        ))}
        {node.children ? (
          <button type="button" aria-label={`Expandir ${node.label}`} aria-expanded={open} onClick={() => setOpen(!open)}>
            {joint}
          </button>
        ) : (
          joint
        )}
        <CheckBox id={path} check={node.check} />
        <svg viewBox="0 0 16 16" className="ml-0.5 h-4 w-4 shrink-0">
          {glyphs[node.icon]}
        </svg>
        <label
          htmlFor={path}
          className={
            node.selected
              ? "ml-[3px] border border-dotted border-[#ff8728] bg-[#0078d7] px-px leading-4 font-bold whitespace-nowrap text-white"
              : "ml-[3px] border border-transparent px-px leading-4 whitespace-nowrap text-black"
          }
        >
          {node.label}
        </label>
      </div>
      {node.children && open && (
        <ul>
          {node.children.map((child, i) => (
            <TreeItem
              key={child.label}
              node={child}
              guides={[...guides, !last]}
              last={i === node.children!.length - 1 && !child.more}
              path={`${path}-${i}`}
            />
          ))}
        </ul>
      )}
    </li>
  );
}

function Navigator() {
  return (
    <aside className="flex w-[368px] shrink-0 flex-col border-r-2 border-[#a9b0c2] bg-[#e9edf6]">
      <header className="flex h-5 shrink-0 items-center border-b border-[#a0a7b8] pr-0.5 pl-1 text-[#444b59]">
        <h1 className="flex-1">Navegador de projetos - Mostrar</h1>
        <button type="button" aria-label="Fixar" className="mr-1.5">
          <Pin size={10} />
        </button>
        <button type="button" aria-label="Fechar">
          <X size={12} />
        </button>
      </header>
      <div className="flex min-h-0 flex-1 border-l-2 border-[#b9bfcd]">
        <div className="relative min-w-0 flex-1 overflow-hidden bg-[#fcfbf3] pt-[3px] pl-[3px]">
          <ul>
            {tree.map((node, i) => (
              <TreeItem key={node.label} node={node} guides={[]} last={i === tree.length - 1 && !node.more} path={`t${i}`} />
            ))}
          </ul>
          {/* highlight around the smooth distribution options */}
          <div className="pointer-events-none absolute top-[253px] left-[54px] h-[42px] w-[182px] border-3 border-[#c00000]" />
        </div>
        <div className="mr-0.5 flex w-[15px] shrink-0 flex-col items-center bg-[#f0f0f0] pt-1">
          <ChevronUp size={14} strokeWidth={3} color="#505050" />
          <div className="mt-[303px] h-[295px] w-full bg-[#cdcdcd]" />
        </div>
      </div>
    </aside>
  );
}

/* ---------- model view ---------- */

const steps = (count: number) => Array.from({ length: count }, (_, i) => i);
const lerp = (a: number, b: number, t: number) => a + (b - a) * t;

function ModelView() {
  return (
    <main className="relative min-w-0 flex-1 border-t-2 border-l-2 border-[#6f7278] bg-white">
      <svg viewBox="375 101 998 761" preserveAspectRatio="xMinYMin meet" className="h-full w-full">
        <path d="M525.500 289L1307 309.500L1222 500L440 479.500Z" fill="#7575c5" />
        <g stroke="#a8a8a0" strokeDasharray="1.500 1.500">
          {steps(15).map((i) => {
            const t = (i + 1) / 16;
            return (
              <path
                key={i}
                d={`M${lerp(525.5, 440, t)} ${lerp(289, 479.5, t)}L${lerp(1307, 1222, t)} ${lerp(309.5, 500, t)}M${lerp(525.5, 1307, t)} ${lerp(289, 309.5, t)}L${lerp(440, 1222, t)} ${lerp(479.5, 500, t)}`}
              />
            );
          })}
        </g>
        <path d="M525.500 289L440 479.500M1307 309.500L1222 500" stroke="#000" strokeWidth="1.300" />
        {steps(5).map((i) => (
          <g key={i}>
            <rect x={598 + 156.2 * i} y={290 + 4.1 * i} width="12" height="5" fill="#2fae6f" />
            <rect x={512 + 156.2 * i} y={481.5 + 4.1 * i} width="12" height="4" fill="#80ff80" />
          </g>
        ))}
        <path d="M525.500 289L1307 309.500M440 479.500L1222 500" stroke="#00ff00" strokeWidth="1.600" />

        {/* linear load */}
        <path d="M440.500 452.500L1221.500 312V473.500Z" fill="#0000a0" fillOpacity=".12" stroke="#000080" strokeWidth="1.200" />
        {steps(8).map((i) => {
          const t = (i + 1) / 8;
          const x = lerp(440.5, 1221.5, t);
          const tip = lerp(452.5, 473.5, t);
          return (
            <g key={i}>
              <path d={`M${x} ${lerp(452.5, 312, t)}V${tip}`} stroke="#000080" strokeWidth="1.200" />
              <path d={`M${x - 5} ${tip - 8}h10l-5 8z`} fill="#000080" />
            </g>
          );
        })}
        <Dot x={1221.5} y={312} s={4} c="#000080" />
        <Dot x={525.5} y={289} s={4} c="#900000" />
        <Dot x={1307} y={309.5} s={4} c="#900000" />
        <Dot x={1222} y={500} s={4} c="#900000" />
        <Dot x={440} y={479.5} s={4} c="#900000" />

        {/* constant support reaction */}
        <path d="M440.500 537L1221.500 558V615.500L440.500 595Z" fill="#ebffed" stroke="#00ff00" strokeWidth="1.200" />
        {steps(17).map((i) => {
          const t = i / 16;
          const x = lerp(440.5, 1221.5, t);
          const top = lerp(537, 558, t);
          return (
            <g key={i}>
              <path d={`M${x} ${top}V${lerp(595, 615.5, t)}`} stroke="#00f000" />
              <path d={`M${x - 3} ${top + 9}h6l-3-8z`} fill="#00ff00" />
            </g>
          );
        })}
        <g fontFamily="Liberation Sans" fontSize="9" textAnchor="middle">
          <text x="1224" y="305" fill="#000080">
            10.000
          </text>
          <text x="831" y="620" fill="#00f000">
            5.00
          </text>
        </g>
      </svg>
      <div className="absolute top-[5px] left-[3px] font-['Liberation_Sans',sans-serif] text-[11px] leading-[14px] text-black">
        <p>Reações do apoio [kN/m]</p>
        <p>CC1</p>
        <p>Cargas [kN/m]</p>
      </div>
    </main>
  );
}

export default function App() {
  return (
    <div className="flex h-screen flex-col overflow-hidden bg-[#d0d4de] font-['Open_Sans',sans-serif] text-[11px]">
      <div className="flex h-[23px] shrink-0 items-center bg-white pl-0.5 text-black">
        <svg viewBox="0 0 16 16" className="mr-[5px] h-4 w-4">
          <path d="M4 4L9 1L15 4V11L10 15L4 11Z" fill="#4f6f96" stroke="#263c58" />
          <path d="M6 5Q9 2 11 6V13M9 3Q12 2 14 6V11" fill="none" stroke="#a9c4e2" strokeWidth="1.300" />
          <path d="M6 8H2V11Q6 10 5.500 13Q5 15 1.500 14" fill="none" stroke="#e8b21c" strokeWidth="2" />
        </svg>
        RFEM 5.24.01 x64 - [4970_model-file, CC1]
      </div>

      <nav className="flex h-6 shrink-0 items-center text-[#444b59]">
        <Grip />
        <svg viewBox="0 0 16 13" className="mr-0.5 ml-0.5 h-[13px] w-4">
          <rect width="16" height="13" fill="#1d2758" />
          <path d="M0 9.500H16M5 2V12M0 8L5 2L8 6M12 4V12M8 7L12 4L16 8" fill="none" stroke="#fff" strokeWidth="1.200" />
        </svg>
        {menus.map(([before, key, after]) => (
          <button key={key} type="button" className="pr-[7px] pl-2 whitespace-nowrap">
            {before}
            <u>{key}</u>
            {after}
          </button>
        ))}
      </nav>

      <div className="mt-px flex shrink-0 gap-0.5">
        <Bar items={fileBar}>
          <div className="relative mr-[3px] ml-0.5 flex h-[19px] w-[215px] shrink-0 items-center bg-white">
            <select aria-label="Caso de carga" defaultValue="CC1" className="h-full w-full appearance-none pl-1 text-black">
              <option>CC1</option>
            </select>
            <span className="pointer-events-none absolute inset-y-0 right-0 flex w-[13px] items-center justify-center border border-[#d3d7e0] bg-[#e6e9f1]">
              <Caret />
            </span>
          </div>
          {caseBar.map((item, i) => (
            <ToolItem key={i} item={item} />
          ))}
        </Bar>
        <Bar items={gridBar} />
        <Bar items={exportBar} />
      </div>
      <div className="mt-px flex shrink-0 gap-0.5">
        <Bar items={insertBar} />
        <Bar items={viewBar} />
        <Bar items={resultBar} />
      </div>

      <div className="flex min-h-0 flex-1 gap-[5px]">
        <Navigator />
        <ModelView />
      </div>
    </div>
  );
}
